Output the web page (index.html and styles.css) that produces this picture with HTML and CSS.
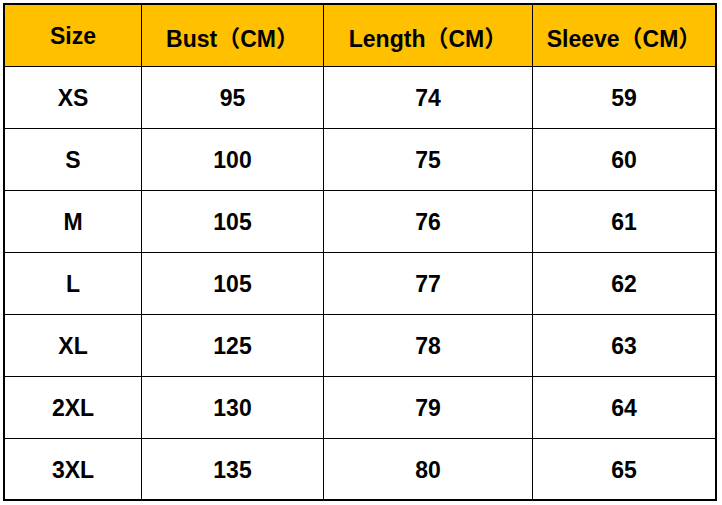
FILE: index.html
```html
<!DOCTYPE html>
<html>
<head>
<meta charset="utf-8">
<link rel="stylesheet" href="styles.css">
</head>
<body>
<div class="chart">
  <div class="cell head">Size</div>
  <div class="cell head">Bust（CM）</div>
  <div class="cell head">Length（CM）</div>
  <div class="cell head last-col">Sleeve（CM）</div>

  <div class="cell">XS</div><div class="cell">95</div><div class="cell">74</div><div class="cell last-col">59</div>
  <div class="cell">S</div><div class="cell">100</div><div class="cell">75</div><div class="cell last-col">60</div>
  <div class="cell">M</div><div class="cell">105</div><div class="cell">76</div><div class="cell last-col">61</div>
  <div class="cell">L</div><div class="cell">105</div><div class="cell">77</div><div class="cell last-col">62</div>
  <div class="cell">XL</div><div class="cell">125</div><div class="cell">78</div><div class="cell last-col">63</div>
  <div class="cell">2XL</div><div class="cell">130</div><div class="cell">79</div><div class="cell last-col">64</div>
  <div class="cell last-row">3XL</div><div class="cell last-row">135</div><div class="cell last-row">80</div><div class="cell last-row last-col">65</div>
</div>
</body>
</html>
```

FILE: styles.css
```css
html, body {
  margin: 0;
  padding: 0;
  background: #ffffff;
}

body {
  padding: 3px 0 0 3px;
}

.chart {
  box-sizing: border-box;
  width: 714px;
  border: 2px solid #000;
  display: grid;
  grid-template-columns: 137px 182px 209px 182px;
  grid-template-rows: repeat(7, 62px) 60px;
  font-family: "Liberation Sans", Arial, "Noto Sans CJK SC", sans-serif;
  font-weight: bold;
  font-size: 23px;
  color: #000;
}

.cell {
  box-sizing: border-box;
  display: flex;
  align-items: center;
  justify-content: center;
  padding-top: 2px;
  border-right: 1px solid #000;
  border-bottom: 1px solid #000;
  white-space: nowrap;
}

.head {
  background: #ffc000;
}

.last-col {
  border-right: none;
}

.last-row {
  border-bottom: none;
}
```
